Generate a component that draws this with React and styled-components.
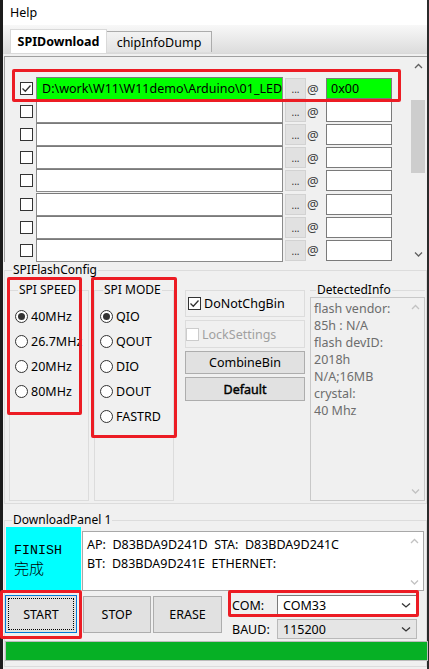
import React from 'react';
import styled, { createGlobalStyle } from 'styled-components';

const GlobalStyle = createGlobalStyle`
    html, body {
        margin: 0;
        padding: 0;
        background: #f0f0f0;
    }
    body {
        font-family: "Noto Sans", "Liberation Sans", sans-serif;
        font-size: 12px;
        color: #000;
    }
    * {
        box-sizing: border-box;
    }
`;

const Window = styled.div`
    position: relative;
    width: 429px;
    height: 669px;
    display: flex;
    flex-direction: column;
    background: #f0f0f0;
    border-left: 3px solid #1c1c1c;
    border-right: 2px solid #2b2b2b;
`;

const MenuBar = styled.div`
    height: 25px;
    display: flex;
    align-items: center;
    padding-left: 7px;
    background: #ffffff;
    font-size: 12.5px;
`;

const TabStrip = styled.div`
    height: 28px;
    display: flex;
    align-items: flex-end;
    padding-left: 7px;
    background: linear-gradient(#f8f8f8, #dcdcdc);
`;

const Tab = styled.div`
    width: ${(p) => p.$width}px;
    height: ${(p) => (p.$active ? 24 : 21)}px;
    margin-bottom: ${(p) => (p.$active ? 0 : 1)}px;
    display: flex;
    align-items: center;
    justify-content: center;
    border: 1px solid ${(p) => (p.$active ? '#d9d9d9' : '#acacac')};
    border-bottom: none;
    border-left-width: ${(p) => (p.$active ? 1 : 0)}px;
    background: ${(p) =>
        p.$active ? '#ffffff' : 'linear-gradient(#f3f3f3, #e3e3e3)'};
    font-size: 12.5px;
    font-weight: ${(p) => (p.$active ? 700 : 400)};
`;

const TabBody = styled.div`
    flex: 1;
    display: flex;
    flex-direction: column;
    border-top: 1px solid #d9d9d9;
    padding-top: 2px;
`;

// red call-out frame drawn over whatever it wraps
const Mark = styled.div`
    position: relative;
    display: flex;
    margin-left: ${(p) => p.$ml || 0}px;
    &::after {
        content: '';
        position: absolute;
        inset: ${(p) => p.$inset};
        border: 3px solid #ec1c24;
        border-radius: 2px;
        pointer-events: none;
        z-index: 2;
    }
`;

/* ---------- file list ---------- */

const FileArea = styled.div`
    height: 206px;
    margin-left: 1px;
    display: flex;
    border-top: 1px solid #a0a0a0;
    border-left: 1px solid #a0a0a0;
`;

const FileRows = styled.div`
    flex: 1;
    display: flex;
    flex-direction: column;
    padding-top: 20px;
`;

const Row = styled.div`
    flex: 1;
    height: 23px;
    display: flex;
    align-items: center;
`;

const CheckCell = styled.div`
    width: 31px;
    padding-left: 15px;
    display: flex;
    align-items: center;
`;

const Box = styled.div`
    width: 13px;
    height: 13px;
    flex-shrink: 0;
    display: flex;
    align-items: center;
    justify-content: center;
    background: #ffffff;
    border: 1px solid ${(p) => (p.$disabled ? '#cccccc' : '#333333')};
`;

const PathField = styled.div`
    width: 247px;
    height: 23px;
    display: flex;
    align-items: center;
    padding-left: 5px;
    overflow: hidden;
    white-space: nowrap;
    background: ${(p) => (p.$on ? '#00ff00' : '#ffffff')};
    border: 1px solid #8a8a8a;
    border-top-color: #7a7a7a;
    font-size: 12.5px;
`;

const DotsButton = styled.div`
    width: 21px;
    height: 21px;
    margin-left: 2px;
    display: flex;
    align-items: flex-end;
    justify-content: center;
    padding-bottom: 4px;
    background: #e1e1e1;
    border: 1px solid #d2d2d2;
    font-size: 10px;
    line-height: 1;
    color: #333;
`;

const AtSign = styled.div`
    width: 20px;
    padding-left: 1px;
    font-size: 13px;
    color: #404040;
`;

const OffsetField = styled.div`
    width: 66px;
    height: 21px;
    display: flex;
    align-items: center;
    padding-left: 4px;
    background: ${(p) => (p.$on ? '#00ff00' : '#ffffff')};
    border: 1px solid #7a7a7a;
    font-size: 12.5px;
`;

const ScrollBar = styled.div`
    width: 17px;
    display: flex;
    flex-direction: column;
    background: #f0f0f0;
`;

const ScrollArrow = styled.div`
    height: 17px;
    display: flex;
    align-items: center;
    justify-content: center;
`;

const ScrollTrack = styled.div`
    flex: 1;
`;

const ScrollThumb = styled.div`
    width: 14px;
    height: ${(p) => p.$size}px;
    margin: ${(p) => p.$offset}px 0 0 1px;
    background: #cdcdcd;
`;

/* ---------- group boxes ---------- */

const GroupBox = styled.fieldset`
    margin: 0;
    padding: 0;
    min-width: 0;
    border: 1px solid #dcdcdc;
`;

const Legend = styled.legend`
    margin-left: ${(p) => p.$indent}px;
    padding: 0 1px;
    font-size: 12px;
    line-height: 16px;
`;

const FlashConfig = styled(GroupBox)`
    margin-left: 1px;
`;

const ConfigRow = styled.div`
    display: flex;
    padding: 4px 0 2px 4px;
`;

const OptionGroup = styled(GroupBox)`
    width: 80px;
    height: 219px;
`;

const RadioList = styled.div`
    display: flex;
    flex-direction: column;
    padding-top: 6px;
`;

const RadioRow = styled.div`
    height: 25px;
    display: flex;
    align-items: center;
    gap: 3px;
    padding-left: 5px;
    font-size: 12.5px;
    white-space: nowrap;
`;

const RadioDot = styled.div`
    width: 13px;
    height: 13px;
    flex-shrink: 0;
    display: flex;
    align-items: center;
    justify-content: center;
    border-radius: 50%;
    border: 1px solid #333;
    background: #fff;

    &::after {
        content: '';
        width: 7px;
        height: 7px;
        border-radius: 50%;
        background: ${(p) => (p.$checked ? '#333' : 'transparent')};
    }
`;

const MiddleColumn = styled.div`
    width: 120px;
    margin-left: 11px;
    padding-top: 8px;
    display: flex;
    flex-direction: column;
    gap: 3px;
`;

const OptionBox = styled.div`
    height: ${(p) => p.$h}px;
    display: flex;
    align-items: center;
    gap: 3px;
    padding-left: ${(p) => p.$pad}px;
    border: 1px solid #dcdcdc;
    font-size: 12.5px;
    color: ${(p) => (p.$disabled ? '#a0a0a0' : '#000')};
`;

const PushButton = styled.div`
    height: ${(p) => p.$h}px;
    display: flex;
    align-items: center;
    justify-content: center;
    background: #e1e1e1;
    border: 1px solid #adadad;
    font-size: 12.5px;
    -webkit-text-stroke: ${(p) => (p.$strong ? '0.45px #000' : '0')};
`;

const DetectedGroup = styled(GroupBox)`
    flex: 1;
    margin: 0 1px 0 5px;
    display: flex;
    flex-direction: column;
    border: none;
    border-top: 1px solid #dcdcdc;
`;

const InfoBox = styled.div`
    flex: 1;
    display: flex;
    margin-top: -1px;
    background: #f0f0f0;
    border: 1px solid #c8c8c8;
`;

const InfoText = styled.div`
    flex: 1;
    padding: 2px 0 0 3px;
    line-height: 17px;
    font-size: 12.5px;
    color: #6d6d6d;
`;

const SideScroll = styled.div`
    width: 17px;
    display: flex;
    flex-direction: column;
    justify-content: space-between;
    align-items: center;
    padding: ${(p) => p.$pad};
`;

/* ---------- download panel ---------- */

const DownloadPanel = styled(GroupBox)`
    margin: 8px 0 2px 1px;
    padding-bottom: 5px;
    display: flex;
    flex-direction: column;
`;

const StatusRow = styled.div`
    display: flex;
    align-items: flex-start;
`;

const FinishBox = styled.div`
    width: 75px;
    height: 63px;
    margin: -1px 0 0 1px;
    padding: 15px 0 0 8px;
    background: #00ffff;
    line-height: 17px;
`;

const FinishLatin = styled.div`
    font-family: "Liberation Mono", monospace;
    font-size: 13.3px;
`;

const FinishCjk = styled.div`
    font-family: "Noto Sans CJK SC", sans-serif;
    font-size: 15px;
    font-weight: 300;
`;

const LogBox = styled.div`
    flex: 1;
    height: 60px;
    margin: 3px 2px 0 1px;
    display: flex;
    background: #ffffff;
    border: 1px solid #a8a8a8;
`;

const LogText = styled.div`
    flex: 1;
    padding: 3px 0 0 4px;
    line-height: 19px;
    font-size: 12.5px;
    white-space: pre;
`;

const ButtonRow = styled.div`
    height: 39px;
    margin-top: 4px;
    display: flex;
    align-items: flex-start;
`;

const ActionButton = styled.div`
    width: ${(p) => p.$w}px;
    height: ${(p) => p.$h}px;
    margin: ${(p) => p.$mt || 0}px 0 0 ${(p) => p.$ml || 0}px;
    display: flex;
    align-items: center;
    justify-content: center;
    padding: ${(p) => (p.$focused ? 2 : 0)}px;
    background: #e1e1e1;
    border: 1px solid ${(p) => (p.$focused ? '#0078d7' : '#adadad')};
    font-size: 12.5px;
`;

const FocusRing = styled.div`
    flex: 1;
    align-self: stretch;
    display: flex;
    align-items: center;
    justify-content: center;
    border: 1px dotted #000;
`;

const PortColumn = styled.div`
    margin-left: 7px;
    display: flex;
    flex-direction: column;
    gap: 4px;
`;

const PortRow = styled.div`
    height: 20px;
    display: flex;
    align-items: center;
`;

const PortLabel = styled.div`
    width: 48px;
    padding-left: 3px;
    font-size: 12.5px;
`;

const Select = styled.div`
    width: 140px;
    height: 20px;
    display: flex;
    align-items: center;
    justify-content: space-between;
    padding: 0 5px;
    background: ${(p) => (p.$flat ? '#e5e5e5' : '#ffffff')};
    border: 1px solid ${(p) => (p.$flat ? '#b9b9b9' : '#7a7a7a')};
    font-size: 12.5px;
`;

const Progress = styled.div`
    height: 20px;
    margin: 7px -2px 0 0;
    background: #06b025;
    border: 1px solid #bcbcbc;
`;

/* ---------- little drawings ---------- */

const Chevron = ({ up, color = '#606060', w = 9 }) => (
    <svg width={w} height="6" viewBox={`0 0 ${w} 6`}>
        <polyline
            points={
                up
                    ? `1,5 ${w / 2},1.5 ${w - 1},5`
                    : `1,1.5 ${w / 2},5 ${w - 1},1.5`
            }
            fill="none"
            stroke={color}
            strokeWidth="1.3"
        />
    </svg>
);

const Tick = () => (
    <svg width="11" height="11" viewBox="0 0 11 11">
        <polyline
            points="1.5,5.5 4.3,8.3 9.5,2.5"
            fill="none"
            stroke="#333"
            strokeWidth="1.3"
        />
    </svg>
);

const CheckBox = ({ checked, disabled }) => (
    <Box $disabled={disabled}>{checked ? <Tick /> : null}</Box>
);

const Radio = ({ label, checked }) => (
    <RadioRow>
        <RadioDot $checked={checked} />
        {label}
    </RadioRow>
);

const files = [
    {
        checked: true,
        path: 'D:\\work\\W11\\W11demo\\Arduino\\01_LED',
        offset: '0x00',
    },
    {},
    {},
    {},
    {},
    {},
    {},
    {},
];

const speeds = ['40MHz', '26.7MHz', '20MHz', '80MHz'];
const modes = ['QIO', 'QOUT', 'DIO', 'DOUT', 'FASTRD'];

const detected = [
    'flash vendor:',
    '85h : N/A',
    'flash devID:',
    '2018h',
    'N/A;16MB',
    'crystal:',
    '40 Mhz',
];

const FileRow = ({ file }) => {
    const on = Boolean(file.path);
    return (
        <Row>
            <CheckCell>
                <CheckBox checked={file.checked} />
            </CheckCell>
            <PathField $on={on}>{file.path}</PathField>
            <DotsButton>...</DotsButton>
            <AtSign>@</AtSign>
            <OffsetField $on={on}>{file.offset}</OffsetField>
        </Row>
    );
};

const App = () => (
    <Window>
        <GlobalStyle />
        <MenuBar>Help</MenuBar>
        <TabStrip>
            <Tab $active $width={97}>
                SPIDownload
            </Tab>
            <Tab $width={105}>chipInfoDump</Tab>
        </TabStrip>

        <TabBody>
            <FileArea>
                <FileRows>
                    {files.map((file, i) =>
                        i === 0 ? (
                            <Mark key={i} $inset="-8px 9px -2px 7px">
                                <FileRow file={file} />
                            </Mark>
                        ) : (
                            <FileRow key={i} file={file} />
                        )
                    )}
                </FileRows>
                <ScrollBar>
                    <ScrollArrow>
                        <Chevron up />
                    </ScrollArrow>
                    <ScrollTrack>
                        <ScrollThumb $offset={26} $size={73} />
                    </ScrollTrack>
                    <ScrollArrow>
                        <Chevron />
                    </ScrollArrow>
                </ScrollBar>
            </FileArea>

            <FlashConfig>
                <Legend $indent={7}>SPIFlashConfig</Legend>
                <ConfigRow>
                    <Mark $inset="-5px 7px 86px -2px">
                        <OptionGroup>
                            <Legend $indent={8}>SPI SPEED</Legend>
                            <RadioList>
                                {speeds.map((s, i) => (
                                    <Radio key={s} label={s} checked={i === 0} />
                                ))}
                            </RadioList>
                        </OptionGroup>
                    </Mark>
                    <Mark $ml={5} $inset="-5px -3px 63px -3px">
                        <OptionGroup>
                            <Legend $indent={8}>SPI MODE</Legend>
                            <RadioList>
                                {modes.map((m, i) => (
                                    <Radio key={m} label={m} checked={i === 0} />
                                ))}
                            </RadioList>
                        </OptionGroup>
                    </Mark>
                    <MiddleColumn>
                        <OptionBox $h={27} $pad={2}>
                            <CheckBox checked />
                            DoNotChgBin
                        </OptionBox>
                        <OptionBox $h={28} $pad={0} $disabled>
                            <CheckBox disabled />
                            LockSettings
                        </OptionBox>
                        <PushButton $h={23}>CombineBin</PushButton>
                        <PushButton $h={24} $strong>
                            Default
                        </PushButton>
                    </MiddleColumn>
                    <DetectedGroup>
                        <Legend $indent={6}>DetectedInfo</Legend>
                        <InfoBox>
                            <InfoText>
                                {detected.map((line) => (
                                    <div key={line}>{line}</div>
                                ))}
                            </InfoText>
                            <SideScroll $pad="6px 0 6px">
                                <Chevron up color="#c2c2c2" />
                                <Chevron color="#c2c2c2" />
                            </SideScroll>
                        </InfoBox>
                    </DetectedGroup>
                </ConfigRow>
            </FlashConfig>

            <DownloadPanel>
                <Legend $indent={7}>DownloadPanel 1</Legend>
                <StatusRow>
                    <FinishBox>
                        <FinishLatin>FINISH</FinishLatin>
                        <FinishCjk>完成</FinishCjk>
                    </FinishBox>
                    <LogBox>
                        <LogText>
                            {'AP:  D83BDA9D241D  STA:  D83BDA9D241C\nBT:  D83BDA9D241E  ETHERNET:'}
                        </LogText>
                        <SideScroll $pad="6px 0 5px">
                            <Chevron up color="#c2c2c2" />
                            <Chevron color="#c2c2c2" />
                        </SideScroll>
                    </LogBox>
                </StatusRow>

                <ButtonRow>
                    <Mark $inset="-5px -5px -6px -5px">
                        <ActionButton $w={72} $h={38} $focused>
                            <FocusRing>START</FocusRing>
                        </ActionButton>
                    </Mark>
                    <ActionButton $w={68} $h={37} $mt={1} $ml={6}>
                        STOP
                    </ActionButton>
                    <ActionButton $w={69} $h={37} $mt={1} $ml={2}>
                        ERASE
                    </ActionButton>
                    <PortColumn>
                        <Mark $inset="-5px -2px -2px -1px">
                            <PortRow>
                                <PortLabel>COM:</PortLabel>
                                <Select>
                                    COM33
                                    <Chevron w={10} color="#333" />
                                </Select>
                            </PortRow>
                        </Mark>
                        <PortRow>
                            <PortLabel>BAUD:</PortLabel>
                            <Select $flat>
                                115200
                                <Chevron w={10} color="#333" />
                            </Select>
                        </PortRow>
                    </PortColumn>
                </ButtonRow>

                <Progress />
            </DownloadPanel>
        </TabBody>
    </Window>
);

export default App;
